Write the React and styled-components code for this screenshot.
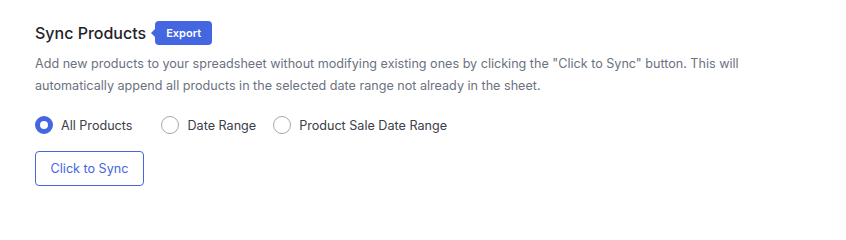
import { useState } from 'react'
import styled, { createGlobalStyle } from 'styled-components'

const GlobalStyle = createGlobalStyle`
  body {
    margin: 0;
    background: #fff;
    font-family: Inter, "Noto Sans", sans-serif;
  }
`

const Wrapper = styled.div`
  padding: 21px 35px 0 35px;
  display: flex;
  flex-direction: column;
`

const TitleRow = styled.div`
  display: flex;
  align-items: center;
  gap: 9px;
  height: 24px;
`

const Title = styled.h3`
  margin: 0;
  font-size: 16px;
  font-weight: 500;
  color: #1f2329;
`

const Badge = styled.span`
  position: relative;
  background: #4466e0;
  color: #fff;
  font-size: 11px;
  font-weight: 600;
  line-height: 24px;
  height: 24px;
  padding: 0 11px;
  border-radius: 4px;

  &::before {
    content: '';
    position: absolute;
    left: -4px;
    top: 8px;
    border-top: 4px solid transparent;
    border-bottom: 4px solid transparent;
    border-right: 4px solid #4466e0;
  }
`

const Desc = styled.p`
  margin: 8px 0 0;
  font-size: 12.6px;
  line-height: 22px;
  color: #6b7280;
  max-width: 720px;
`

const RadioGroup = styled.div`
  display: flex;
  align-items: center;
  margin-top: 19px;
`

const RadioLabel = styled.label`
  display: flex;
  align-items: center;
  gap: 8px;
  margin-right: ${p => p.$space}px;
  font-size: 12.6px;
  color: #3b4049;
  cursor: pointer;
`

const Circle = styled.span`
  box-sizing: border-box;
  width: 18px;
  height: 18px;
  border-radius: 50%;
  background: #fff;
  border: ${p => (p.$checked ? '5px solid #4466e0' : '1px solid #a3a7ae')};
`

const SyncButton = styled.button`
  margin-top: 17px;
  align-self: flex-start;
  width: 109px;
  height: 35px;
  background: #fff;
  border: 1px solid #4466e0;
  border-radius: 4px;
  color: #4466e0;
  font-family: inherit;
  font-size: 12.6px;
  cursor: pointer;
`

const options = [
  { label: 'All Products', space: 29 },
  { label: 'Date Range', space: 17 },
  { label: 'Product Sale Date Range', space: 0 },
]

export default function App() {
  const [selected, setSelected] = useState('All Products')

  return (
    <>
      <GlobalStyle />
      <Wrapper>
        <TitleRow>
          <Title>Sync Products</Title>
          <Badge>Export</Badge>
        </TitleRow>
        <Desc>
          Add new products to your spreadsheet without modifying existing ones by clicking the "Click to Sync" button. This will automatically append all products in the selected date range not already in the sheet.
        </Desc>
        <RadioGroup>
          {options.map(o => (
            <RadioLabel key={o.label} $space={o.space} onClick={() => setSelected(o.label)}>
              <Circle $checked={selected === o.label} />
              {o.label}
            </RadioLabel>
          ))}
        </RadioGroup>
        <SyncButton>Click to Sync</SyncButton>
      </Wrapper>
    </>
  )
}
